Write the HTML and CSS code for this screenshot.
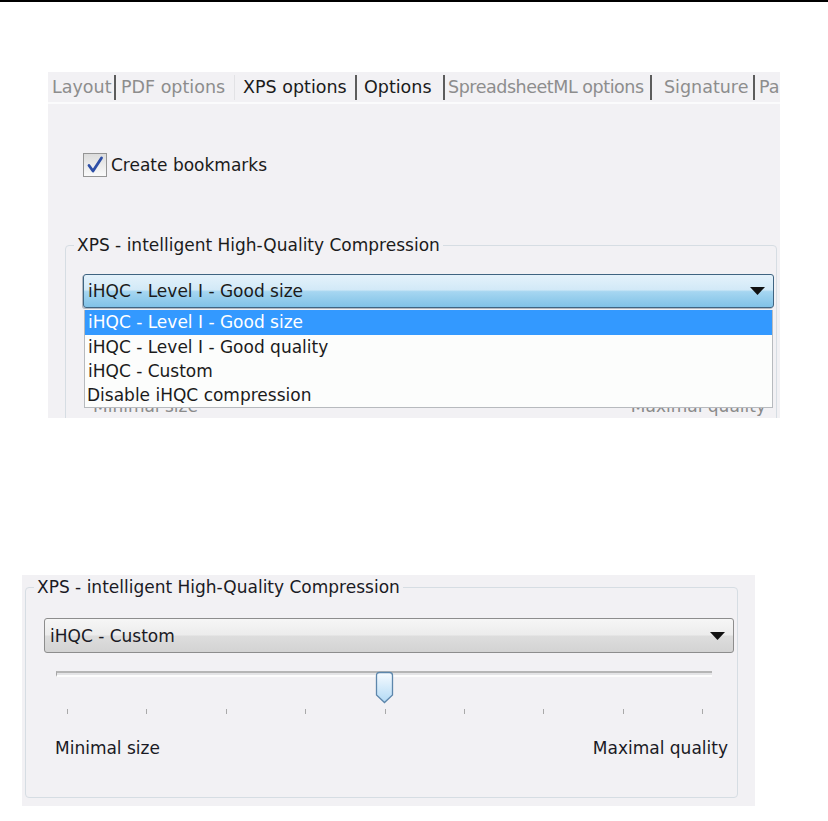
FILE: index.html
```html
<!DOCTYPE html>
<html lang="en">
<head>
<meta charset="utf-8">
<title>XPS options</title>
<link rel="stylesheet" href="styles.css">
</head>
<body>
<div class="rule"></div>

<div class="shot shot1">
  <div class="tabs">
    <span class="tab t-layout">Layout</span><span class="sep"></span>
    <span class="tab t-pdf">PDF options</span><span class="sep faint"></span>
    <span class="tab t-xps active">XPS options</span><span class="sep"></span>
    <span class="tab t-opt active">Options</span><span class="sep"></span>
    <span class="tab t-sml">SpreadsheetML options</span><span class="sep"></span>
    <span class="tab t-sig">Signature</span><span class="sep"></span>
    <span class="tab t-pa">Pa</span>
  </div>
  <div class="tabline"></div>

  <label class="check-row">
    <span class="checkbox">
      <svg width="22" height="22" viewBox="0 0 22 22"><path d="M5 11.5 L9 17 L17.5 4" fill="none" stroke="#2d4ea6" stroke-width="2.8" stroke-linecap="round" stroke-linejoin="round"/></svg>
    </span>
    Create bookmarks
  </label>

  <fieldset class="group g1">
    <legend>XPS - intelligent High-Quality Compression</legend>
    <div class="group-body b1">
      <div class="combo combo-blue">
        <span>iHQC - Level I - Good size</span>
        <svg class="arrow" width="15" height="8" viewBox="0 0 15 8"><path d="M0 0 H15 L7.5 8 Z" fill="#111"/></svg>
      </div>
      <div class="slider">
        <div class="track"></div>
        <svg class="thumb" style="left:331px" width="19" height="33" viewBox="0 0 19 33"><defs><linearGradient id="tg1" x1="0" y1="0" x2="0" y2="1"><stop offset="0" stop-color="#f7fbff"/><stop offset="1" stop-color="#b2daf5"/></linearGradient></defs><path d="M1.5 4.5 Q1.5 1.5 4.5 1.5 H14.5 Q17.5 1.5 17.5 4.5 V24 L9.5 31.5 L1.5 24 Z" fill="url(#tg1)" stroke="#5d86ab" stroke-width="1.3"/></svg>
      </div>
      <div class="ticks"><i></i><i></i><i></i><i></i><i></i><i></i><i></i><i></i><i></i></div>
      <div class="labels l1"><span>Minimal size</span><span>Maximal quality</span></div>
      <ul class="list">
        <li class="sel">iHQC - Level I - Good size</li>
        <li>iHQC - Level I - Good quality</li>
        <li>iHQC - Custom</li>
        <li class="dis">Disable iHQC compression</li>
      </ul>
    </div>
  </fieldset>
</div>

<div class="shot shot2">
  <fieldset class="group g2">
    <legend>XPS - intelligent High-Quality Compression</legend>
    <div class="group-body b2">
      <div class="combo combo-gray">
        <span>iHQC - Custom</span>
        <svg class="arrow" width="15" height="8" viewBox="0 0 15 8"><path d="M0 0 H15 L7.5 8 Z" fill="#111"/></svg>
      </div>
      <div class="slider">
        <div class="track"></div>
        <svg class="thumb" style="left:331px" width="19" height="33" viewBox="0 0 19 33"><defs><linearGradient id="tg2" x1="0" y1="0" x2="0" y2="1"><stop offset="0" stop-color="#f7fbff"/><stop offset="1" stop-color="#b2daf5"/></linearGradient></defs><path d="M1.5 4.5 Q1.5 1.5 4.5 1.5 H14.5 Q17.5 1.5 17.5 4.5 V24 L9.5 31.5 L1.5 24 Z" fill="url(#tg2)" stroke="#5d86ab" stroke-width="1.3"/></svg>
      </div>
      <div class="ticks"><i></i><i></i><i></i><i></i><i></i><i></i><i></i><i></i><i></i></div>
      <div class="labels l2"><span>Minimal size</span><span>Maximal quality</span></div>
    </div>
  </fieldset>
</div>
</body>
</html>
```

FILE: styles.css
```css
* { box-sizing: border-box; }

body {
  margin: 0;
  background: #ffffff;
  font-family: "DejaVu Sans", sans-serif;
  color: #1b1b1b;
}

.rule {
  height: 2px;
  background: #000;
}

.shot {
  background: #f2f1f4;
  overflow: hidden;
}

.shot1 {
  margin: 70px 0 0 48px;
  width: 732px;
  height: 346px;
}

.shot2 {
  margin: 157px 0 0 22px;
  width: 733px;
  height: 231px;
}

/* tabs */
.tabs {
  display: flex;
  align-items: center;
  height: 30px;
  font-size: 17.5px;
  color: #8d8d8d;
  white-space: nowrap;
}

.tab {
  flex: none;
  overflow: hidden;
}

.t-layout { width: 66px; padding-left: 4px; }
.t-pdf { width: 118px; padding-left: 5px; }
.t-xps { width: 120px; padding-left: 8px; }
.t-opt { width: 86px; padding-left: 7px; }
.t-sml { width: 205px; padding-left: 3px; letter-spacing: -0.45px; }
.t-sig { width: 101px; padding-left: 12px; }
.t-pa { width: 40px; padding-left: 4px; }

.tab.active { color: #1b1b1b; }

.sep {
  flex: none;
  width: 2px;
  height: 25px;
  background: #5c5c5c;
}

.sep.faint {
  width: 1px;
  background: #e2e2e5;
}

.tabline {
  height: 2px;
  background: #fbfbfc;
}

/* checkbox */
.check-row {
  display: flex;
  align-items: center;
  gap: 4px;
  height: 24px;
  margin: 49px 0 0 35px;
  font-size: 17px;
}

.checkbox {
  flex: none;
  width: 24px;
  height: 24px;
  border: 1px solid #959595;
  background: linear-gradient(#dcdcdc, #fafafa);
  display: flex;
  align-items: center;
  justify-content: center;
}

/* group boxes */
.group {
  margin: 0;
  border: 1px solid #d6dde3;
  border-radius: 4px;
  min-width: 0;
}

.group legend {
  padding: 0 3px;
  font-size: 17px;
  line-height: 20px;
}

.g1 {
  margin: 58px 0 0 17px;
  width: 712px;
  height: 320px;
  padding: 0 2px 0 8px;
}

.g2 {
  margin: 2px 0 0 3px;
  width: 713px;
  height: 221px;
  padding: 0 3px 0 8px;
  color: #1a1a24;
}

.group-body { position: relative; }
.b1 { padding: 19px 0 0 9px; }
.b2 { padding: 21px 0 0 10px; }

/* combo boxes */
.combo {
  display: flex;
  align-items: center;
  justify-content: space-between;
  border-radius: 3px;
  font-size: 17px;
  padding: 0 8px 0 4px;
}

.combo-blue {
  height: 34px;
  border: 1px solid #3f6481;
  background: linear-gradient(#e4f2fb 0%, #d2e9f7 46%, #a6d6f1 52%, #80c2e7 100%);
  box-shadow: -1px 1px 0 rgba(60, 80, 100, 0.35);
}

.combo-gray {
  height: 35px;
  padding-left: 5px;
  border: 1px solid #8d8d8d;
  background: linear-gradient(#f6f6f6 0%, #ececec 48%, #dddddd 52%, #d3d3d3 100%);
}

/* slider */
.slider {
  position: relative;
  height: 33px;
  margin-top: 18px;
}

.track {
  margin: 12px 22px 0 12px;
  height: 6px;
  border-top: 2px solid #b5b5b5;
  border-left: 1px solid #a5a5a5;
  border-bottom: 2px solid #fcfcfc;
  background: #e4e4e6;
}

.thumb {
  position: absolute;
  top: 0;
}

.ticks {
  display: flex;
  justify-content: space-between;
  width: 636px;
  height: 5px;
  margin: 5px 0 0 23px;
}

.ticks i {
  width: 1px;
  height: 5px;
  background: #a9a9a9;
}

.labels {
  display: flex;
  justify-content: space-between;
  font-size: 17px;
  line-height: 20px;
}

.l1 { margin-top: 27px; padding: 0 8px 0 10px; color: #8a8a8a; }
.l2 { margin-top: 24px; padding: 0 6px 0 11px; }

/* drop-down list */
.list {
  position: absolute;
  left: 10px;
  right: 1px;
  top: 55px;
  margin: 0;
  padding: 0;
  list-style: none;
  background: #fcfdfc;
  border: 1px solid #b7babe;
  border-top: none;
  font-size: 17px;
}

.list li {
  height: 24px;
  line-height: 24px;
  padding-left: 3px;
}

.list li.sel {
  height: 25px;
  background: #3399ff;
  color: #ffffff;
}

.list li.dis { padding-left: 2px; }
```
